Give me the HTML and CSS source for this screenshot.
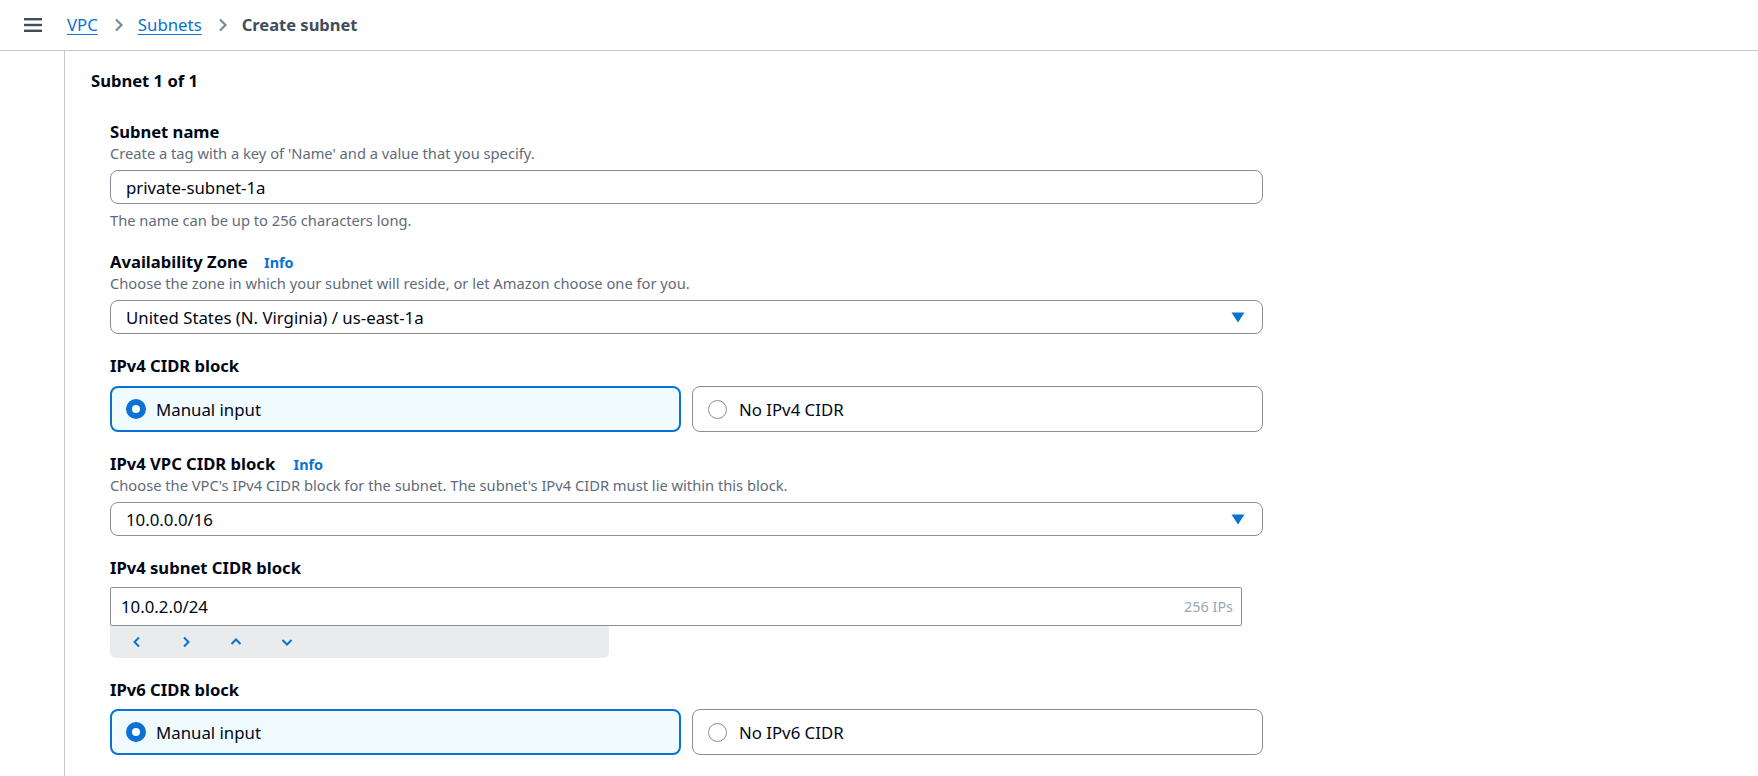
FILE: index.html
```html
<!DOCTYPE html>
<html lang="en">
<head>
<meta charset="utf-8">
<title>Create subnet</title>
<link rel="stylesheet" href="styles.css">
</head>
<body>
<header class="topbar">
  <button class="menu-btn" aria-label="Open navigation">
    <svg width="18" height="16" viewBox="0 0 18 16"><rect x="0" y="1" width="18" height="2.4" fill="#414d5c"/><rect x="0" y="6.8" width="18" height="2.4" fill="#414d5c"/><rect x="0" y="12.6" width="18" height="2.4" fill="#414d5c"/></svg>
  </button>
  <nav class="crumbs">
    <a class="crumb-link" href="#">VPC</a>
    <svg class="crumb-sep" width="10" height="14" viewBox="0 0 10 14"><path d="M2 1.5 L7.5 7 L2 12.5" fill="none" stroke="#7d8998" stroke-width="2.2"/></svg>
    <a class="crumb-link" href="#">Subnets</a>
    <svg class="crumb-sep" width="10" height="14" viewBox="0 0 10 14"><path d="M2 1.5 L7.5 7 L2 12.5" fill="none" stroke="#7d8998" stroke-width="2.2"/></svg>
    <span class="crumb-current">Create subnet</span>
  </nav>
</header>
<div class="layout">
  <aside class="gutter"></aside>
  <main class="content">
    <h2 class="section-title">Subnet 1 of 1</h2>
    <div class="fields">
      <div class="field">
        <div class="label">Subnet name</div>
        <div class="desc">Create a tag with a key of 'Name' and a value that you specify.</div>
        <div class="input">private-subnet-1a</div>
        <div class="hint">The name can be up to 256 characters long.</div>
      </div>
      <div class="field">
        <div class="label">Availability Zone <a class="info" href="#">Info</a></div>
        <div class="desc">Choose the zone in which your subnet will reside, or let Amazon choose one for you.</div>
        <div class="input select">
          <span>United States (N. Virginia) / us-east-1a</span>
          <svg width="14" height="11" viewBox="0 0 14 11"><path d="M0.5 0.5 H13.5 L7 10.5 Z" fill="#0972d3"/></svg>
        </div>
      </div>
      <div class="field">
        <div class="label">IPv4 CIDR block</div>
        <div class="tiles tiles-gap10">
          <div class="tile tile-on"><span class="radio radio-on"></span><span>Manual input</span></div>
          <div class="tile"><span class="radio"></span><span>No IPv4 CIDR</span></div>
        </div>
      </div>
      <div class="field">
        <div class="label">IPv4 VPC CIDR block <a class="info info-wide" href="#">Info</a></div>
        <div class="desc">Choose the VPC's IPv4 CIDR block for the subnet. The subnet's IPv4 CIDR must lie within this block.</div>
        <div class="input select">
          <span>10.0.0.0/16</span>
          <svg width="14" height="11" viewBox="0 0 14 11"><path d="M0.5 0.5 H13.5 L7 10.5 Z" fill="#0972d3"/></svg>
        </div>
      </div>
      <div class="field">
        <div class="label">IPv4 subnet CIDR block</div>
        <div class="cidr">
          <span>10.0.2.0/24</span>
          <span class="cidr-count">256 IPs</span>
        </div>
        <div class="stepper">
          <svg width="10" height="12" viewBox="0 0 10 12"><path d="M7 1.5 L2.5 6 L7 10.5" fill="none" stroke="#0972d3" stroke-width="2"/></svg>
          <svg width="10" height="12" viewBox="0 0 10 12"><path d="M3 1.5 L7.5 6 L3 10.5" fill="none" stroke="#0972d3" stroke-width="2"/></svg>
          <svg width="12" height="12" viewBox="0 0 12 12"><path d="M1.5 8 L6 3.5 L10.5 8" fill="none" stroke="#0972d3" stroke-width="2"/></svg>
          <svg width="12" height="12" viewBox="0 0 12 12"><path d="M1.5 4 L6 8.5 L10.5 4" fill="none" stroke="#0972d3" stroke-width="2"/></svg>
        </div>
      </div>
      <div class="field field-last">
        <div class="label">IPv6 CIDR block</div>
        <div class="tiles">
          <div class="tile tile-on"><span class="radio radio-on"></span><span>Manual input</span></div>
          <div class="tile"><span class="radio"></span><span>No IPv6 CIDR</span></div>
        </div>
      </div>
    </div>
  </main>
</div>
</body>
</html>
```
FILE: styles.css
```css
* { box-sizing: border-box; }
html, body { margin: 0; padding: 0; }
body {
  font-family: "Noto Sans", "Open Sans", sans-serif;
  color: #000716;
  background: #ffffff;
  height: 776px;
  overflow: hidden;
}
.topbar {
  height: 51px;
  border-bottom: 1px solid #c6c6cd;
  display: flex;
  align-items: center;
  padding-left: 24px;
}
.menu-btn {
  border: 0;
  background: none;
  padding: 0;
  width: 18px;
  height: 16px;
  display: flex;
  margin-right: 25px;
}
.crumbs {
  display: flex;
  align-items: center;
  font-size: 16.8px;
  line-height: 22px;
}
.crumb-link {
  color: #0972d3;
  text-decoration: underline;
  text-underline-offset: 3px;
}
.crumb-sep { margin: 0 14px 0 16px; }
.crumb-current { color: #414d5c; font-weight: 700; font-size: 16.5px; }

.layout {
  display: flex;
  height: calc(776px - 51px);
}
.gutter {
  width: 65px;
  flex: none;
  border-right: 1px solid #c6c6cd;
  background: #ffffff;
}
.content {
  flex: 1;
  padding: 19px 0 0 26px;
}
.section-title {
  margin: 0 0 28px;
  font-size: 16.6px;
  line-height: 22px;
  font-weight: 700;
}
.fields {
  margin-left: 19px;
  width: 1153px;
  display: flex;
  flex-direction: column;
}
.field { margin-bottom: 20px; }
.field .label:first-child { padding-top: 1px; }
.label {
  font-size: 16.6px;
  line-height: 22px;
  font-weight: 700;
}
.info {
  font-size: 14.4px;
  line-height: 1;
  color: #0972d3;
  text-decoration: none;
  margin-left: 12px;
  font-weight: 700;
}
.info-wide { margin-left: 14px; }
.desc, .hint {
  font-size: 14.7px;
  line-height: 20px;
  color: #5f6b7a;
}
.hint { margin-top: 6px; }
.input {
  margin-top: 7px;
  height: 34px;
  border: 1px solid #8c8c94;
  border-radius: 8px;
  padding: 0 17px 0 15px;
  display: flex;
  align-items: center;
  font-size: 16.8px;
}
.select { justify-content: space-between; }
.tiles {
  margin-top: 8px;
  display: grid;
  grid-template-columns: 1fr 1fr;
  gap: 11px;
}
.tiles-gap10 { margin-top: 9px; }
.tile {
  height: 46px;
  border: 1px solid #8c8c94;
  border-radius: 8px;
  display: flex;
  align-items: center;
  padding-left: 15px;
  gap: 12px;
  font-size: 16.8px;
}
.tile-on {
  border: 2px solid #0972d3;
  background: #f0fbff;
  padding-left: 14px;
  gap: 10px;
}
.radio {
  width: 19px;
  height: 19px;
  border-radius: 50%;
  border: 1.5px solid #8c8c94;
  background: #ffffff;
  flex: none;
}
.radio-on {
  width: 20px;
  height: 20px;
  border: 6.5px solid #0972d3;
}
.cidr {
  margin-top: 8px;
  width: 1132px;
  height: 39px;
  border: 1px solid #8c8c94;
  border-radius: 2px;
  display: flex;
  align-items: center;
  justify-content: space-between;
  padding: 0 8px 0 10px;
  font-size: 16.8px;
}
.cidr-count { font-size: 14.4px; color: #9ba7b6; }
.stepper {
  width: 499px;
  height: 32px;
  background: #e9ebed;
  border-radius: 0 0 6px 6px;
  display: flex;
  align-items: center;
  padding-left: 22px;
  gap: 39px;
}
```
